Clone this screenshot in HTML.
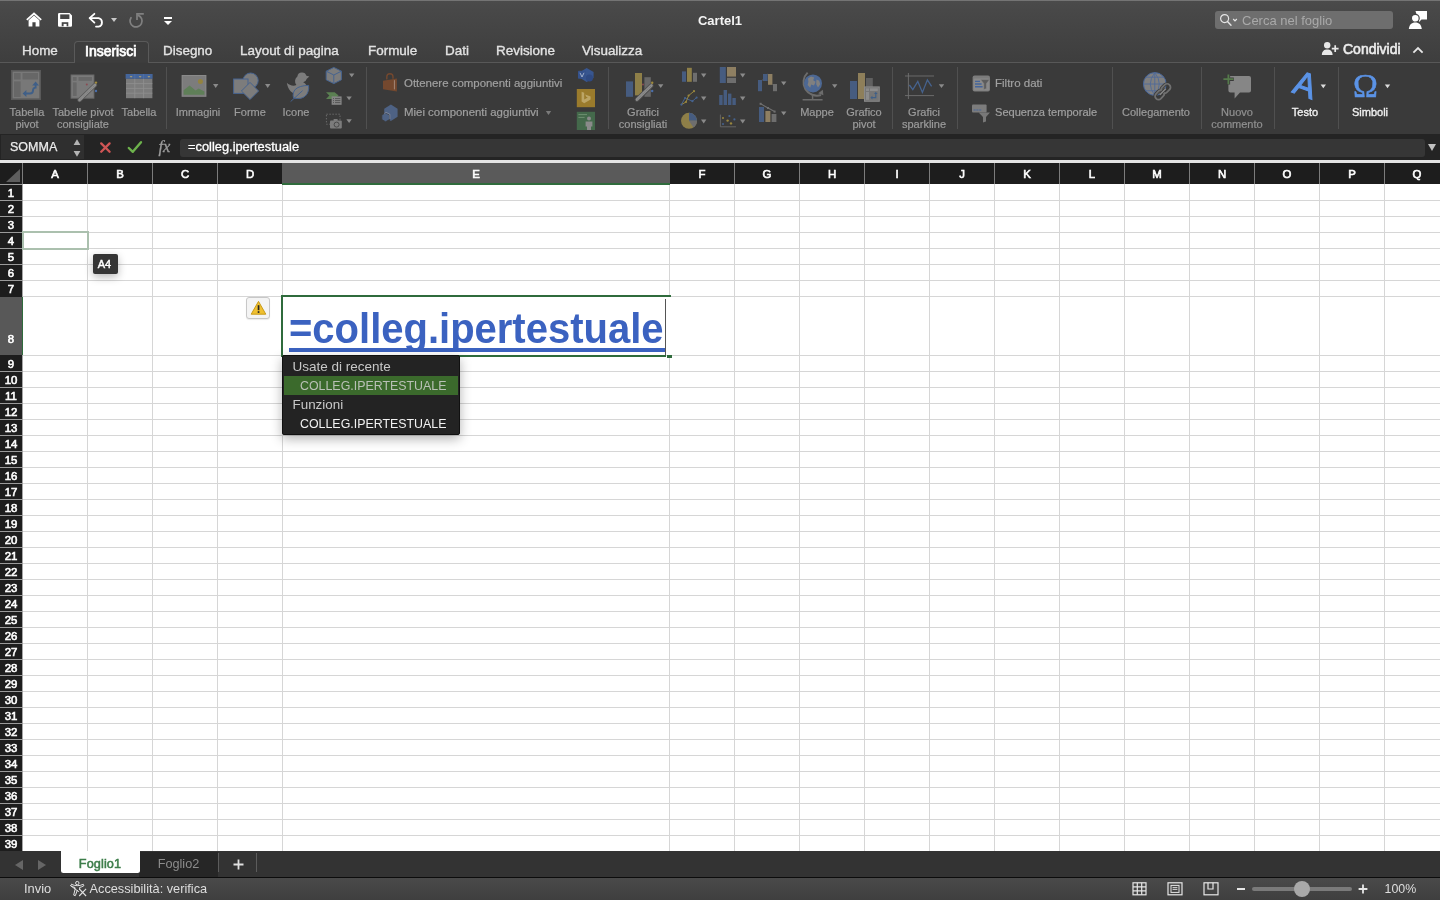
<!DOCTYPE html>
<html lang="it">
<head>
<meta charset="utf-8">
<title>Cartel1</title>
<style>
*{box-sizing:border-box;margin:0;padding:0}
html,body{width:1440px;height:900px;overflow:hidden;background:#fff}
body{position:relative;will-change:transform;font-family:"Liberation Sans",sans-serif;color:#fff;-webkit-font-smoothing:antialiased}
.abs,.abs *{position:absolute}
.t{white-space:nowrap;line-height:1}
/* top chrome */
#chrome{left:0;top:0;width:1440px;height:63px;background:linear-gradient(#4b4b4b 0,#484848 10px,#3e3e3e 62px)}
#chrome .topline{left:0;top:0;width:1440px;height:1px;background:#747474}
#tabline{left:0;top:62px;width:1440px;height:1px;background:#585858}
.tab{top:44px;font-size:13.450px;color:#e2e2e2;-webkit-text-stroke:.35px #e2e2e2}
#ribbon{left:0;top:63px;width:1440px;height:71px;background:#3a3a3a}
.sep{top:4px;width:1px;height:62px;background:#505050}
.rl{font-size:11px;color:#9c9c9c;text-align:center;line-height:12px;white-space:nowrap;-webkit-text-stroke:.2px #9c9c9c}
.arr{width:0;height:0;border-left:3px solid transparent;border-right:3px solid transparent;border-top:4px solid #8a8a8a}
/* formula bar */
#fbar{left:0;top:134px;width:1440px;height:27px;background:#242424}
#fline{left:0;top:160.300px;width:1440px;height:2.500px;background:#e4e4e4}
/* sheet */
#colhdr{left:0;top:163px;width:1440px;height:21px;background:#1d1d1d}
.ch{top:0;height:21px;font-size:11.400px;-webkit-text-stroke:.6px #fff;text-align:center;line-height:22px;color:#fff}
.cs{top:0;width:1px;height:21px;background:#7c7c7c}
#rowhdr{left:0;top:184px;width:22px;height:667px;background:#1d1d1d;overflow:hidden}
.rh{left:0;width:22px;height:16px;font-size:11.400px;-webkit-text-stroke:.6px #fff;text-align:center;line-height:17px;color:#fff}
#grid{left:23px;top:184px;width:1417px;height:667px;overflow:hidden;background:#fff}
.vl{top:0;width:1px;height:667px;background:#d6d6d6}
.hl{left:0;width:1417px;height:1px;background:#d6d6d6}
/* bottom */
#sheettabs{left:0;top:851px;width:1440px;height:27px;background:#333}
#status{left:0;top:878px;width:1440px;height:22px;background:linear-gradient(#4a4a4a,#3f3f3f);font-size:12.900px;color:#dedede}
</style>
</head>
<body>
<div id="chrome" class="abs">
  <div class="topline"></div>
  <!-- quick access icons -->
  <svg style="left:25px;top:11px" width="18" height="17" viewBox="0 0 18 17">
    <path d="M9 1.2 L1.2 8.3 L2.4 9.6 L9 3.7 L15.6 9.6 L16.8 8.3 Z" fill="#fff"/>
    <path d="M3.6 9.3 L9 4.6 L14.4 9.3 V15.6 H10.6 V11.2 H7.4 V15.6 H3.6 Z" fill="#fff"/>
  </svg>
  <svg style="left:57px;top:12px" width="16" height="16" viewBox="0 0 16 16">
    <path d="M2.200 1 H12.600 L15 3.400 V13.600 a1.200 1.200 0 0 1 -1.200 1.200 H2.200 a1.200 1.200 0 0 1 -1.200 -1.200 V2.200 a1.200 1.200 0 0 1 1.200 -1.200 Z" fill="#fff"/>
    <rect x="3.200" y="2.400" width="9.200" height="4.600" fill="#474747"/>
    <rect x="4.700" y="10.200" width="6.600" height="4" fill="#464646"/>
    <rect x="6.600" y="11.900" width="3" height="2.900" fill="#fff"/>
  </svg>
  <svg style="left:88px;top:12px" width="18" height="16" viewBox="0 0 18 16">
    <path d="M6.4 1.8 L1.6 6.2 L6.4 10.6" fill="none" stroke="#fff" stroke-width="1.8" stroke-linecap="round" stroke-linejoin="round"/>
    <path d="M2 6.2 H10.6 A4.3 4.3 0 0 1 10.6 14.6 H8" fill="none" stroke="#fff" stroke-width="1.8" stroke-linecap="round"/>
  </svg>
  <div class="arr" style="left:110.800px;top:18px;border-top-color:#c8c8c8;border-left-width:3px;border-right-width:3px;border-top-width:4.200px"></div>
  <svg style="left:128px;top:12px" width="17" height="17" viewBox="0 0 17 17">
    <path d="M3 5.700 A6 6 0 1 0 10.300 3.400" fill="none" stroke="#808080" stroke-width="1.700" stroke-linecap="round"/>
    <path d="M9 8 V1.850 H15.800" fill="none" stroke="#808080" stroke-width="1.700" stroke-linejoin="miter"/>
  </svg>
  <div style="left:164px;top:17px;width:8px;height:2px;background:#fff"></div>
  <div class="arr" style="left:164px;top:21px;border-top-color:#fff;border-left-width:4px;border-right-width:4px;border-top-width:4.5px"></div>
  <!-- title -->
  <div class="t" style="left:620px;width:200px;top:14px;text-align:center;font-size:13px;font-weight:bold;color:#f4f4f4">Cartel1</div>
  <!-- search -->
  <div style="left:1215px;top:11px;width:178px;height:18px;border-radius:3px;background:#6e6e6e"></div>
  <svg style="left:1219px;top:13px" width="20" height="14" viewBox="0 0 20 14">
    <circle cx="5.6" cy="5.6" r="4" fill="none" stroke="#e6e6e6" stroke-width="1.2"/>
    <path d="M8.5 8.5 L12 12.2" stroke="#e6e6e6" stroke-width="1.4" stroke-linecap="round"/>
    <path d="M14.2 6 L16 7.8 L17.8 6" fill="none" stroke="#e6e6e6" stroke-width="1.2"/>
  </svg>
  <div class="t" style="left:1242px;top:14px;font-size:13px;color:#a9a9a9">Cerca nel foglio</div>
  <!-- person/comment icon -->
  <svg style="left:1408px;top:10px" width="20" height="20" viewBox="0 0 20 20">
    <path d="M7.5 1 H19 V9.5 H13.5 L11 12 V9.5 H10" fill="#fff"/>
    <circle cx="7.3" cy="8.3" r="3.9" fill="#fff" stroke="#454545" stroke-width="1.2"/>
    <path d="M0.8 19 C1.5 13.8 4.5 12.6 7.3 12.6 C10.1 12.6 13.1 13.8 13.8 19 Z" fill="#fff"/>
  </svg>
  <!-- tabs -->
  <div style="left:73.500px;top:40.500px;width:75.500px;height:22.500px;border:1px solid #5a5a5a;border-bottom:none;border-radius:4px 4px 0 0;background:#3d3d3d"></div>
  <div class="t tab" style="left:22px">Home</div>
  <div class="t tab" style="left:85px;font-size:14px;color:#fff;-webkit-text-stroke:.75px #fff">Inserisci</div>
  <div class="t tab" style="left:163px">Disegno</div>
  <div class="t tab" style="left:240px">Layout di pagina</div>
  <div class="t tab" style="left:368px">Formule</div>
  <div class="t tab" style="left:445px">Dati</div>
  <div class="t tab" style="left:496px">Revisione</div>
  <div class="t tab" style="left:582px">Visualizza</div>
  <!-- share -->
  <svg style="left:1321px;top:41px" width="19" height="15" viewBox="0 0 19 15">
    <circle cx="6.2" cy="4.2" r="3.2" fill="#e8e8e8"/>
    <path d="M0.8 14 C1 9.6 3.4 8.4 6.2 8.4 C9 8.4 11.4 9.6 11.6 14 Z" fill="#e8e8e8"/>
    <path d="M14.2 4.2 V11 M10.8 7.6 H17.6" stroke="#e8e8e8" stroke-width="1.7"/>
  </svg>
  <div class="t" style="left:1343px;top:42px;font-size:14px;color:#ececec;-webkit-text-stroke:.6px #ececec">Condividi</div>
  <svg style="left:1412px;top:46px" width="12" height="8" viewBox="0 0 12 8">
    <path d="M1.4 6.6 L6 2 L10.6 6.6" fill="none" stroke="#e8e8e8" stroke-width="1.8"/>
  </svg>
</div>
<div id="tabline" class="abs"></div>
<div class="abs" style="left:75px;top:62px;width:73px;height:1px;background:#3c3c3c"></div>
<div id="ribbon" class="abs">
<svg style="left:0;top:0" width="1440" height="71" viewBox="0 63 1440 71">
<defs>
  <path id="dd" d="M0 0 H5.400 L2.700 3.900 Z"/>
</defs>
<!-- separators -->
<g fill="#505050">
<rect x="166" y="67" width="1" height="62"/><rect x="366" y="67" width="1" height="62"/><rect x="608" y="67" width="1" height="62"/>
<rect x="892" y="67" width="1" height="62"/><rect x="957" y="67" width="1" height="62"/><rect x="1112" y="67" width="1" height="62"/>
<rect x="1201" y="67" width="1" height="62"/><rect x="1274" y="67" width="1" height="62"/><rect x="1338" y="67" width="1" height="62"/>
</g>
<!-- pivot table -->
<rect x="11" y="70" width="30" height="30" fill="#595959"/>
<rect x="12.6" y="71.6" width="26.8" height="26.8" fill="#787878"/>
<g fill="#676767"><rect x="14" y="73" width="6.6" height="6.5"/><rect x="22.5" y="73" width="15.5" height="6.5"/><rect x="14" y="81.4" width="6.6" height="15.6"/></g>
<g fill="none" stroke="#3f5f88" stroke-width="1.9"><path d="M25 93.5 H30 Q33 93.5 33 90.5 Q33 87.6 35.6 87.6 V84.5"/></g>
<path d="M22.6 93.5 L26.4 90 V97 Z M35.6 81.6 L32.2 85.6 H39 Z" fill="#3f5f88"/>
<!-- recommended pivot -->
<rect x="70.6" y="74.5" width="23.8" height="24.2" fill="#6a6a6a"/>
<rect x="71.6" y="75.5" width="21.8" height="22.2" fill="#7a7a7a"/>
<g fill="#686868"><rect x="72.9" y="77" width="3.7" height="3.8"/><rect x="78.5" y="77" width="13.4" height="3.8"/><rect x="72.9" y="82.4" width="3.7" height="13.6"/></g>
<path d="M79.5 100 L95 85" stroke="#5a5a5a" stroke-width="4.4" stroke-linecap="round"/>
<path d="M79.5 100 L95 85" stroke="#8d8d8d" stroke-width="2.6" stroke-linecap="round"/>
<path d="M80 99.5 L94.5 85.5" stroke="#707070" stroke-width="0.8" stroke-dasharray="1 1"/>
<circle cx="86.8" cy="84.6" r="1" fill="#8a4a52"/><circle cx="96" cy="82.6" r="1.2" fill="#a08a3c"/><circle cx="96" cy="91" r="1.2" fill="#4a6eaa"/>
<!-- table -->
<rect x="125.6" y="74" width="27" height="4.8" fill="#44659b"/>
<rect x="126" y="78.8" width="26.4" height="19.4" fill="#7c7c7c"/>
<g stroke="#8f8f8f" stroke-width="0.8"><path d="M134.8 78.8 V98.2 M143.6 78.8 V98.2 M126 83.6 H152.4 M126 88.4 H152.4 M126 93.2 H152.4"/></g>
<g stroke="#5577ad" stroke-width="0.6"><path d="M134.8 74 V78.8 M143.6 74 V78.8"/></g>
<g fill="#a59a72"><path d="M129.6 76 h3 l-1.5 1.8z M138.6 76 h3 l-1.5 1.8z M147.4 76 h3 l-1.5 1.8z"/></g>
<!-- picture -->
<rect x="181.6" y="75" width="24.8" height="21.8" fill="#8a8a8a"/>
<rect x="182.6" y="76" width="22.8" height="19.8" fill="#7c7c7c"/>
<circle cx="200.4" cy="81.6" r="2.5" fill="#93823f"/>
<path d="M183.6 94.8 V90.2 L189.6 85.6 L195.6 90.6 L198.6 88.6 L204.4 91.6 V94.8 Z" fill="#5f7f58"/>
<use href="#dd" x="213" y="84" fill="#8a8a8a"/>
<!-- shapes -->
<circle cx="250.6" cy="80.6" r="7.6" fill="#7c7c7c" stroke="#46638f" stroke-width="1"/>
<rect x="233.6" y="79" width="14.4" height="14.4" fill="#7c7c7c" stroke="#46638f" stroke-width="1"/>
<path d="M250 82.4 L258.6 91 L250 99.6 L241.4 91 Z" fill="#7c7c7c" stroke="#46638f" stroke-width="1"/>
<use href="#dd" x="265" y="84" fill="#8a8a8a"/>
<!-- icons: duck + leaf -->
<path d="M297.4 76.4 a4.6 4.6 0 0 1 9 -0.6 l3 0.6 l-2.6 2.4 a4.6 4.6 0 0 1 -3.6 3.4 c3 1.6 4.4 4 4 6.6 c-0.6 3.6 -4 5.6 -8.600 5.600 c-6.800 0 -10.600 -4.600 -11.800 -11.600 c2.600 2.600 6.600 3.600 9.600 2.200 a6 6 0 0 1 1 -8.600 z" fill="#7c7c7c"/>
<path d="M293.6 98 C291.600 91 296 85.600 308.600 85.400 C309.600 94.600 303.600 100.400 293.600 98 Z" fill="#7c7c7c" stroke="#46638f" stroke-width="1"/>
<path d="M290.600 101.600 L302.600 90.600" stroke="#46638f" stroke-width="1"/>
<!-- 3d cube -->
<path d="M333.800 67.400 L341.400 71.200 V79.800 L333.800 83.600 L326.200 79.800 V71.200 Z" fill="#7c7c7c" stroke="#46638f" stroke-width="1"/>
<path d="M326.200 71.200 L333.800 75 L341.400 71.200 M333.800 75 V83.600" fill="none" stroke="#46638f" stroke-width="1"/>
<use href="#dd" x="349" y="73.400" fill="#8a8a8a"/>
<!-- smartart -->
<path d="M326 92.200 H334.600 L338.600 95.600 L334.600 99 H326 L329.400 95.600 Z" fill="#5b8052"/>
<rect x="331.600" y="96.400" width="10" height="8.400" fill="#868686"/>
<g stroke="#505050" stroke-width="0.9"><path d="M333 98.600 h1 M335 98.600 h5.400 M333 100.600 h1 M335 100.600 h5.400 M333 102.600 h1 M335 102.600 h5.400"/></g>
<use href="#dd" x="346.400" y="96.400" fill="#8a8a8a"/>
<!-- screenshot -->
<rect x="326.400" y="114.200" width="13.600" height="10" fill="none" stroke="#6c6c6c" stroke-width="1" stroke-dasharray="1.400 1.600"/>
<rect x="330" y="120.400" width="11.800" height="8.200" rx="1" fill="#7c7c7c"/>
<rect x="333.600" y="119" width="4" height="2" fill="#7c7c7c"/>
<circle cx="336.600" cy="124.600" r="2.500" fill="#7c7c7c" stroke="#4a4a4a" stroke-width="1"/>
<use href="#dd" x="346.400" y="119.200" fill="#8a8a8a"/>
<!-- store bag -->
<path d="M386.800 79.600 V76.800 a3.100 3.100 0 0 1 6.200 0 V78.800" fill="none" stroke="#74482e" stroke-width="1.400"/>
<path d="M383 80.700 L396.900 78.600 V91.400 L383 89.200 Z" fill="#74482e"/>
<path d="M394.400 80.200 V89.400" stroke="#a98f80" stroke-width="0.900"/>
<!-- my addins cube -->
<path d="M390.900 104.500 L397.600 108.700 V116.700 L390.900 120.900 L384.200 116.700 V108.700 Z" fill="#4e6284"/>
<path d="M385.600 112.700 L389.600 115 V119.500 L385.600 121.800 L381.800 119.500 V115 Z" fill="#4e6284" stroke="#3a3a3a" stroke-width="0.800"/>
<path d="M384.200 113.600 L385.900 112.300 L389.900 114.300 V119" fill="none" stroke="#8791a6" stroke-width="0.800"/>
<use href="#dd" x="545.800" y="111" fill="#7a7a7a"/>
<!-- visio -->
<path d="M586.600 68 L593.600 72 V78 L586.600 82 L581 78.600 V71.400 Z" fill="#38568f"/>
<circle cx="589.400" cy="78" r="3.600" fill="#2f4a82"/>
<rect x="578" y="70.800" width="8" height="8" rx="0.800" fill="#35528c"/>
<path d="M580 72.800 L582 77 L584 72.800" fill="none" stroke="#aab8d0" stroke-width="0.900"/>
<!-- bing -->
<rect x="576.800" y="89" width="18.200" height="18.200" fill="#9a7b2c"/>
<path d="M581.600 91.800 L584.200 92.800 V99.400 L587.800 97.600 L586.200 96.800 L585.200 94.600 L590.600 96.400 V99.400 L584.200 103.200 L581.600 101.600 Z" fill="#bca566"/>
<!-- people graph -->
<rect x="576.800" y="111.800" width="18.200" height="18.200" fill="#44694b"/>
<path d="M578.400 114.600 H587 M578.400 117.400 H584.600" stroke="#6e9070" stroke-width="1"/>
<circle cx="589" cy="118.400" r="2" fill="#8a8a8a"/>
<path d="M585.600 121.600 H592.400 V126.600 H591 V130 H587 V126.600 H585.600 Z" fill="#8a8a8a"/>
<!-- recommended charts -->
<rect x="626" y="81.400" width="7" height="15.400" fill="#465c80"/>
<rect x="635" y="73" width="7" height="22.400" fill="#8e7f48"/>
<rect x="644.400" y="77.200" width="6.400" height="19.600" fill="#686868"/>
<path d="M637 99.600 L651.400 85.600" stroke="#4c4c4c" stroke-width="4.600" stroke-linecap="round"/>
<path d="M637 99.600 L651.400 85.600" stroke="#8d8d8d" stroke-width="2.800" stroke-linecap="round"/>
<path d="M637.400 99.200 L651 86" stroke="#6c6c6c" stroke-width="0.800" stroke-dasharray="1 1"/>
<circle cx="643" cy="84.600" r="1" fill="#8a4a52"/><circle cx="652.200" cy="82.800" r="1.200" fill="#a08a3c"/><circle cx="652.200" cy="91" r="1.200" fill="#4a6eaa"/>
<use href="#dd" x="658" y="84.200" fill="#8a8a8a"/>
<!-- column small -->
<rect x="682" y="71.400" width="4" height="10.400" fill="#465c80"/><rect x="687" y="67.800" width="4.800" height="14" fill="#8e7f48"/><rect x="693" y="72.800" width="4" height="9" fill="#6e6e6e"/>
<use href="#dd" x="701" y="73.600" fill="#8a8a8a"/>
<!-- line -->
<path d="M681.400 104.600 L685 98 L692.400 101.200 L696.600 97.600" fill="none" stroke="#46638f" stroke-width="1"/>
<path d="M681.400 104.600 L686 102 L688.600 95.600 L694 91.200" fill="none" stroke="#9a873e" stroke-width="1"/>
<g fill="#46638f"><circle cx="681.400" cy="104.600" r="1.100"/><circle cx="685" cy="98" r="1.100"/><circle cx="692.400" cy="101.200" r="1.100"/><circle cx="696.600" cy="97.600" r="1.100"/></g>
<g fill="#9a873e"><circle cx="686" cy="102" r="1.100"/><circle cx="688.600" cy="95.600" r="1.100"/><circle cx="694" cy="91.200" r="1.100"/></g>
<use href="#dd" x="701" y="96.600" fill="#8a8a8a"/>
<!-- pie -->
<circle cx="689" cy="120.800" r="8" fill="#8e7f48"/>
<path d="M689 120.800 V112.800 A8 8 0 0 1 697 120.800 Z" fill="#465c80"/>
<path d="M689 120.800 H697 A8 8 0 0 1 693.400 127.500 Z" fill="#6e6e6e"/>
<use href="#dd" x="701" y="119.600" fill="#8a8a8a"/>
<!-- treemap -->
<rect x="719.800" y="67" width="6" height="16" fill="#465c80"/><rect x="727" y="67" width="9" height="9.600" fill="#8e7f62"/><rect x="727" y="77.800" width="9" height="5.200" fill="#6e6e6e"/>
<use href="#dd" x="740" y="73.600" fill="#8a8a8a"/>
<!-- histogram -->
<g fill="#465c80"><rect x="719.200" y="95" width="3.400" height="10"/><rect x="723.600" y="90" width="3.400" height="15"/><rect x="728" y="93.600" width="3.400" height="11.400"/><rect x="732.400" y="98" width="3.400" height="7"/></g>
<use href="#dd" x="740" y="96.600" fill="#8a8a8a"/>
<!-- scatter -->
<path d="M720.400 114.600 V126.800 H736" fill="none" stroke="#6a6a6a" stroke-width="0.900"/>
<g fill="#9a873e"><circle cx="723" cy="118" r="1"/><circle cx="727.600" cy="120.600" r="1.200"/><circle cx="731" cy="123.400" r="1.200"/></g>
<g fill="#46638f"><circle cx="729.400" cy="116" r="1.100"/><circle cx="734.400" cy="119.400" r="1.100"/><circle cx="723" cy="124" r="1"/></g>
<use href="#dd" x="740" y="119.600" fill="#8a8a8a"/>
<!-- waterfall -->
<rect x="758" y="80" width="4" height="11.200" fill="#465c80"/><rect x="763" y="74" width="4.600" height="7" fill="#465c80"/><rect x="768" y="74" width="4.400" height="10.800" fill="#8e7f62"/><rect x="773" y="84" width="4" height="7.200" fill="#6e6e6e"/>
<path d="M762 80 h1.200 M767.400 74.200 h0.800 M772.200 84.600 h1" stroke="#6a6a6a" stroke-width="0.700"/>
<use href="#dd" x="781" y="81.400" fill="#8a8a8a"/>
<!-- combo -->
<rect x="759" y="107" width="5" height="15" fill="#465c80"/><rect x="765.400" y="111" width="5" height="11" fill="#8e7f62"/><rect x="771.600" y="114" width="4.800" height="8" fill="#6e6e6e"/>
<path d="M760.600 103.800 L768 108 L774.600 111.600" fill="none" stroke="#707070" stroke-width="1.100"/>
<g fill="#707070"><rect x="759.600" y="102.800" width="2" height="2"/><rect x="767" y="107" width="2" height="2"/><rect x="773.600" y="110.600" width="2" height="2"/></g>
<use href="#dd" x="781" y="111.400" fill="#8a8a8a"/>
<!-- maps globe -->
<path d="M807.600 72.600 A13.400 13.400 0 0 0 821 95" fill="none" stroke="#6c6c6c" stroke-width="2"/>
<circle cx="813" cy="83.400" r="9" fill="#4d6894"/>
<path d="M808 78.600 l3 -2.200 l3.200 1.200 l-1 2.600 l2.400 1.600 l-1.600 3.600 l-2.800 -0.800 l-1 3.200 l-2.600 -2.800 l0.800 -3.200 z M816.400 79.600 l2.800 1.200 l1 3.400 l-2.200 3.200 l-1.800 -3.200 z" fill="#808080"/>
<path d="M812.600 95.400 V99.200 M802.600 99.800 H822.600" stroke="#6c6c6c" stroke-width="1.500"/>
<path d="M818.200 93.200 l4.600 -3.400 l0.600 5.400 z" fill="#6c6c6c"/>
<use href="#dd" x="832" y="84.200" fill="#8a8a8a"/>
<!-- pivot chart -->
<rect x="850" y="81" width="7" height="18" fill="#465c80"/><rect x="858" y="73" width="7" height="26" fill="#8e7f5a"/><rect x="866" y="78" width="6.800" height="9" fill="#606060"/>
<rect x="864" y="86.400" width="15.800" height="15.400" fill="#8a8a8a"/>
<rect x="865" y="87.400" width="13.800" height="13.400" fill="#767676"/>
<g fill="#8c8c8c"><rect x="866" y="88.400" width="3" height="2.600"/><rect x="870" y="88.400" width="7.800" height="2.600"/><rect x="866" y="92" width="3" height="7.800"/></g>
<path d="M871.600 97.600 H875.800 V93.400" fill="none" stroke="#3f5f88" stroke-width="1.100"/>
<path d="M870.400 97.600 l2 -1.800 v3.600z M875.800 91.800 l-1.800 2.200 h3.600z" fill="#3f5f88"/>
<!-- sparkline -->
<path d="M908.400 73 V99 M905 76 H934 M905 95.600 H934" fill="none" stroke="#707070" stroke-width="0.900"/>
<path d="M909.400 85 L912.800 89.600 L917.800 81.400 L922.400 92.400 L927.400 79.800 L931.600 86.400" fill="none" stroke="#46638f" stroke-width="1.300"/>
<use href="#dd" x="938.800" y="84.200" fill="#8a8a8a"/>
<!-- slicer -->
<rect x="972.600" y="75.400" width="17.400" height="16.200" rx="2" fill="#7c7c7c"/>
<rect x="973.600" y="78.600" width="15.400" height="12" rx="1" fill="#8a8a8a"/>
<path d="M975 81.400 h5 M975 84 h6.600 M975 86.800 h7.600" stroke="#44659b" stroke-width="1.400"/>
<path d="M980.600 79.600 H989.600 L986.400 83.600 V88.600 L983.800 89.600 V83.600 Z" fill="#5c5c5c" stroke="#8a8a8a" stroke-width="0.500"/>
<!-- timeline -->
<rect x="972" y="104.600" width="14.600" height="8" rx="1" fill="#7c7c7c"/>
<path d="M973.600 110 h2 M976.400 110 h2 M979.200 110 h2" stroke="#44659b" stroke-width="1.200"/>
<path d="M978.600 112.400 H990 L986 117 V121.600 L983 122.400 V117 Z" fill="#787878"/>
<!-- link globe -->
<circle cx="1154.800" cy="84" r="11.400" fill="#808080" stroke="#46659a" stroke-width="1"/>
<path d="M1143.400 84 H1166.200 M1154.800 72.600 V95.400 M1145.600 77.200 H1164 M1145.600 90.800 H1164 M1154.800 72.600 Q1145.800 84 1154.800 95.400 M1154.800 72.600 Q1163.800 84 1154.800 95.400" fill="none" stroke="#4f6a98" stroke-width="0.900"/>
<g transform="rotate(-46 1162.800 91.700)">
<rect x="1153.200" y="88.300" width="10.400" height="6.800" rx="3.400" fill="none" stroke="#3a3a3a" stroke-width="3.400"/>
<rect x="1162" y="88.300" width="10.400" height="6.800" rx="3.400" fill="none" stroke="#3a3a3a" stroke-width="3.400"/>
<rect x="1153.200" y="88.300" width="10.400" height="6.800" rx="3.400" fill="none" stroke="#707070" stroke-width="1.800"/>
<rect x="1162" y="88.300" width="10.400" height="6.800" rx="3.400" fill="none" stroke="#707070" stroke-width="1.800"/>
<path d="M1159.200 91.700 H1166.400" stroke="#3a3a3a" stroke-width="3"/>
<path d="M1158.600 91.700 H1167" stroke="#8a8a8a" stroke-width="1.400"/>
</g>
<!-- new comment -->
<path d="M1230.400 76 H1249 a2 2 0 0 1 2 2 V90.600 a2 2 0 0 1 -2 2 H1240 L1234.600 98.600 V92.600 H1230.400 a2 2 0 0 1 -2 -2 V78 a2 2 0 0 1 2 -2 Z" fill="#868686"/>
<path d="M1228.400 74 V84.600 M1223 79.200 H1233.800" stroke="#3a3a3a" stroke-width="3.400"/>
<path d="M1228.400 74.400 V84.200 M1223.400 79.200 H1233.400" stroke="#557a4b" stroke-width="1.800"/>
<!-- Testo arrows -->
<use href="#dd" x="1320.600" y="84.400" fill="#dcdcdc"/>
<use href="#dd" x="1384.800" y="84.400" fill="#dcdcdc"/>
</svg>
<!-- labels -->
<div class="rl" style="left:-3px;width:60px;top:43px">Tabella<br>pivot</div>
<div class="rl" style="left:43px;width:80px;top:43px">Tabelle pivot<br>consigliate</div>
<div class="rl" style="left:109px;width:60px;top:43px">Tabella</div>
<div class="rl" style="left:168px;width:60px;top:43px">Immagini</div>
<div class="rl" style="left:220px;width:60px;top:43px">Forme</div>
<div class="rl" style="left:266px;width:60px;top:43px">Icone</div>
<div class="rl" style="left:404px;top:14px;text-align:left;color:#a2a2a2;font-size:11.450px">Ottenere componenti aggiuntivi</div>
<div class="rl" style="left:404px;top:43px;text-align:left;color:#a2a2a2;font-size:11.420px">Miei componenti aggiuntivi</div>
<div class="rl" style="left:603px;width:80px;top:43px">Grafici<br>consigliati</div>
<div class="rl" style="left:787px;width:60px;top:43px">Mappe</div>
<div class="rl" style="left:834px;width:60px;top:43px">Grafico<br>pivot</div>
<div class="rl" style="left:894px;width:60px;top:43px">Grafici<br>sparkline</div>
<div class="rl" style="left:995px;top:14px;text-align:left;color:#a2a2a2;font-size:11.500px">Filtro dati</div>
<div class="rl" style="left:995px;top:43px;text-align:left;color:#a2a2a2;font-size:11.080px">Sequenza temporale</div>
<div class="rl" style="left:1116px;width:80px;top:43px">Collegamento</div>
<div class="rl" style="left:1197px;width:80px;top:43px;color:#8c8c8c">Nuovo<br>commento</div>
<div class="rl" style="left:1275px;width:60px;top:43px;color:#f0f0f0;-webkit-text-stroke:.35px #f0f0f0">Testo</div>
<div class="rl" style="left:1340px;width:60px;top:43px;color:#f0f0f0;-webkit-text-stroke:.35px #f0f0f0">Simboli</div>
<svg style="left:1280px;top:0" width="50" height="45" viewBox="1280 63 50 45"><text transform="matrix(1.035 0.375 -0.342 1.085 1291.300 92.100)" font-family="Liberation Sans, sans-serif" font-size="30" fill="#5b93e6" stroke="#5b93e6" stroke-width="0.900">A</text></svg>
<div class="t" style="left:1353px;top:5px;font-family:'Liberation Serif','DejaVu Serif',serif;font-size:34.500px;color:#5b93e6;-webkit-text-stroke:.5px #5b93e6;transform-origin:0 0;transform:scaleX(.97)">Ω</div>
</div>
<div id="fbar" class="abs">
  <div style="left:1px;top:1px;width:83px;height:24px;background:#2f2f2f"></div>
  <div class="t" style="left:10px;top:6.500px;font-size:12.500px;color:#ececec;-webkit-text-stroke:.25px #ececec">SOMMA</div>
  <svg style="left:72px;top:4px" width="10" height="20" viewBox="0 0 10 20"><path d="M5 1.200 L8.400 7 H1.600 Z M5 18.800 L8.400 13 H1.600 Z" fill="#b4b4b4"/></svg>
  <svg style="left:99px;top:7px" width="13" height="13" viewBox="0 0 13 13"><path d="M2.200 2.400 L10.600 10.800 M10.600 2.400 L2.200 10.800" stroke="#d05555" stroke-width="2.300" stroke-linecap="round"/></svg>
  <svg style="left:127px;top:6px" width="16" height="14" viewBox="0 0 16 14"><path d="M1.800 8 L5.800 11.800 L14 2.200" fill="none" stroke="#6db24c" stroke-width="2.400" stroke-linecap="round" stroke-linejoin="round"/></svg>
  <div class="t" style="left:158.500px;top:4.500px;font-family:'Liberation Serif',serif;font-style:italic;font-size:16.500px;color:#9c9c9c;-webkit-text-stroke:.3px #9c9c9c">fx</div>
  <div style="left:180px;top:5px;width:1245px;height:18px;border-radius:3px;background:#363636"></div>
  <div class="t" style="left:188px;top:7.200px;font-size:12.850px;color:#fff;-webkit-text-stroke:.3px #fff">=colleg.ipertestuale</div>
  <div class="arr" style="left:1428px;top:9.500px;border-top-color:#c0c0c0;border-left-width:4.500px;border-right-width:4.500px;border-top-width:7px"></div>
</div>
<div id="fline" class="abs"></div>
<div id="colhdr" class="abs">
<svg style="left:5px;top:5px" width="16" height="15" viewBox="0 0 16 15"><path d="M15 1 V14 H1 Z" fill="#5e5e5e"/></svg>
<div style="left:282px;top:0;width:388px;height:21px;background:#5a5a5a"></div>
<div style="left:282px;top:20px;width:388px;height:2px;background:#2f6b3c;z-index:3"></div>
<div class="ch" style="left:23px;width:64px">A</div>
<div class="ch" style="left:88px;width:64px">B</div>
<div class="ch" style="left:153px;width:64px">C</div>
<div class="ch" style="left:218px;width:64px">D</div>
<div class="ch" style="left:283px;width:386px">E</div>
<div class="ch" style="left:670px;width:64px">F</div>
<div class="ch" style="left:735px;width:64px">G</div>
<div class="ch" style="left:800px;width:64px">H</div>
<div class="ch" style="left:865px;width:64px">I</div>
<div class="ch" style="left:930px;width:64px">J</div>
<div class="ch" style="left:995px;width:64px">K</div>
<div class="ch" style="left:1060px;width:64px">L</div>
<div class="ch" style="left:1125px;width:64px">M</div>
<div class="ch" style="left:1190px;width:64px">N</div>
<div class="ch" style="left:1255px;width:64px">O</div>
<div class="ch" style="left:1320px;width:64px">P</div>
<div class="ch" style="left:1385px;width:64px">Q</div>
<div class="cs" style="left:22px"></div>
<div class="cs" style="left:87px"></div>
<div class="cs" style="left:152px"></div>
<div class="cs" style="left:217px"></div>
<div class="cs" style="left:734px"></div>
<div class="cs" style="left:799px"></div>
<div class="cs" style="left:864px"></div>
<div class="cs" style="left:929px"></div>
<div class="cs" style="left:994px"></div>
<div class="cs" style="left:1059px"></div>
<div class="cs" style="left:1124px"></div>
<div class="cs" style="left:1189px"></div>
<div class="cs" style="left:1254px"></div>
<div class="cs" style="left:1319px"></div>
<div class="cs" style="left:1384px"></div>
</div>
<div id="rowhdr" class="abs">
<div style="left:0;top:113px;width:22px;height:58px;background:#585858"></div>
<div class="rh" style="top:1px">1</div>
<div class="rh" style="top:17px">2</div>
<div class="rh" style="top:33px">3</div>
<div class="rh" style="top:49px">4</div>
<div class="rh" style="top:65px">5</div>
<div class="rh" style="top:81px">6</div>
<div class="rh" style="top:97px">7</div>
<div class="rh" style="top:147px">8</div>
<div class="rh" style="top:172px">9</div>
<div class="rh" style="top:188px">10</div>
<div class="rh" style="top:204px">11</div>
<div class="rh" style="top:220px">12</div>
<div class="rh" style="top:236px">13</div>
<div class="rh" style="top:252px">14</div>
<div class="rh" style="top:268px">15</div>
<div class="rh" style="top:284px">16</div>
<div class="rh" style="top:300px">17</div>
<div class="rh" style="top:316px">18</div>
<div class="rh" style="top:332px">19</div>
<div class="rh" style="top:348px">20</div>
<div class="rh" style="top:364px">21</div>
<div class="rh" style="top:380px">22</div>
<div class="rh" style="top:396px">23</div>
<div class="rh" style="top:412px">24</div>
<div class="rh" style="top:428px">25</div>
<div class="rh" style="top:444px">26</div>
<div class="rh" style="top:460px">27</div>
<div class="rh" style="top:476px">28</div>
<div class="rh" style="top:492px">29</div>
<div class="rh" style="top:508px">30</div>
<div class="rh" style="top:524px">31</div>
<div class="rh" style="top:540px">32</div>
<div class="rh" style="top:556px">33</div>
<div class="rh" style="top:572px">34</div>
<div class="rh" style="top:588px">35</div>
<div class="rh" style="top:604px">36</div>
<div class="rh" style="top:620px">37</div>
<div class="rh" style="top:636px">38</div>
<div class="rh" style="top:652px">39</div>
<div style="left:0;top:0px;width:22px;height:1px;background:#9a9a9a"></div>
<div style="left:0;top:16px;width:22px;height:1px;background:#9a9a9a"></div>
<div style="left:0;top:32px;width:22px;height:1px;background:#9a9a9a"></div>
<div style="left:0;top:48px;width:22px;height:1px;background:#9a9a9a"></div>
<div style="left:0;top:64px;width:22px;height:1px;background:#9a9a9a"></div>
<div style="left:0;top:80px;width:22px;height:1px;background:#9a9a9a"></div>
<div style="left:0;top:96px;width:22px;height:1px;background:#9a9a9a"></div>
<div style="left:0;top:187px;width:22px;height:1px;background:#9a9a9a"></div>
<div style="left:0;top:203px;width:22px;height:1px;background:#9a9a9a"></div>
<div style="left:0;top:219px;width:22px;height:1px;background:#9a9a9a"></div>
<div style="left:0;top:235px;width:22px;height:1px;background:#9a9a9a"></div>
<div style="left:0;top:251px;width:22px;height:1px;background:#9a9a9a"></div>
<div style="left:0;top:267px;width:22px;height:1px;background:#9a9a9a"></div>
<div style="left:0;top:283px;width:22px;height:1px;background:#9a9a9a"></div>
<div style="left:0;top:299px;width:22px;height:1px;background:#9a9a9a"></div>
<div style="left:0;top:315px;width:22px;height:1px;background:#9a9a9a"></div>
<div style="left:0;top:331px;width:22px;height:1px;background:#9a9a9a"></div>
<div style="left:0;top:347px;width:22px;height:1px;background:#9a9a9a"></div>
<div style="left:0;top:363px;width:22px;height:1px;background:#9a9a9a"></div>
<div style="left:0;top:379px;width:22px;height:1px;background:#9a9a9a"></div>
<div style="left:0;top:395px;width:22px;height:1px;background:#9a9a9a"></div>
<div style="left:0;top:411px;width:22px;height:1px;background:#9a9a9a"></div>
<div style="left:0;top:427px;width:22px;height:1px;background:#9a9a9a"></div>
<div style="left:0;top:443px;width:22px;height:1px;background:#9a9a9a"></div>
<div style="left:0;top:459px;width:22px;height:1px;background:#9a9a9a"></div>
<div style="left:0;top:475px;width:22px;height:1px;background:#9a9a9a"></div>
<div style="left:0;top:491px;width:22px;height:1px;background:#9a9a9a"></div>
<div style="left:0;top:507px;width:22px;height:1px;background:#9a9a9a"></div>
<div style="left:0;top:523px;width:22px;height:1px;background:#9a9a9a"></div>
<div style="left:0;top:539px;width:22px;height:1px;background:#9a9a9a"></div>
<div style="left:0;top:555px;width:22px;height:1px;background:#9a9a9a"></div>
<div style="left:0;top:571px;width:22px;height:1px;background:#9a9a9a"></div>
<div style="left:0;top:587px;width:22px;height:1px;background:#9a9a9a"></div>
<div style="left:0;top:603px;width:22px;height:1px;background:#9a9a9a"></div>
<div style="left:0;top:619px;width:22px;height:1px;background:#9a9a9a"></div>
<div style="left:0;top:635px;width:22px;height:1px;background:#9a9a9a"></div>
<div style="left:0;top:651px;width:22px;height:1px;background:#9a9a9a"></div>
<div style="left:0;top:667px;width:22px;height:1px;background:#9a9a9a"></div>
</div>
<div class="abs" style="left:22px;top:184px;width:1px;height:667px;background:#a6a6a6"></div>
<div class="abs" style="left:22px;top:297px;width:1px;height:58px;background:#2f6b3c"></div>
<div id="grid" class="abs">
<div class="vl" style="left:64px"></div>
<div class="vl" style="left:129px"></div>
<div class="vl" style="left:194px"></div>
<div class="vl" style="left:259px"></div>
<div class="vl" style="left:646px"></div>
<div class="vl" style="left:711px"></div>
<div class="vl" style="left:776px"></div>
<div class="vl" style="left:841px"></div>
<div class="vl" style="left:906px"></div>
<div class="vl" style="left:971px"></div>
<div class="vl" style="left:1036px"></div>
<div class="vl" style="left:1101px"></div>
<div class="vl" style="left:1166px"></div>
<div class="vl" style="left:1231px"></div>
<div class="vl" style="left:1296px"></div>
<div class="vl" style="left:1361px"></div>
<div class="hl" style="top:16px"></div>
<div class="hl" style="top:32px"></div>
<div class="hl" style="top:48px"></div>
<div class="hl" style="top:64px"></div>
<div class="hl" style="top:80px"></div>
<div class="hl" style="top:96px"></div>
<div class="hl" style="top:112px"></div>
<div class="hl" style="top:171px"></div>
<div class="hl" style="top:187px"></div>
<div class="hl" style="top:203px"></div>
<div class="hl" style="top:219px"></div>
<div class="hl" style="top:235px"></div>
<div class="hl" style="top:251px"></div>
<div class="hl" style="top:267px"></div>
<div class="hl" style="top:283px"></div>
<div class="hl" style="top:299px"></div>
<div class="hl" style="top:315px"></div>
<div class="hl" style="top:331px"></div>
<div class="hl" style="top:347px"></div>
<div class="hl" style="top:363px"></div>
<div class="hl" style="top:379px"></div>
<div class="hl" style="top:395px"></div>
<div class="hl" style="top:411px"></div>
<div class="hl" style="top:427px"></div>
<div class="hl" style="top:443px"></div>
<div class="hl" style="top:459px"></div>
<div class="hl" style="top:475px"></div>
<div class="hl" style="top:491px"></div>
<div class="hl" style="top:507px"></div>
<div class="hl" style="top:523px"></div>
<div class="hl" style="top:539px"></div>
<div class="hl" style="top:555px"></div>
<div class="hl" style="top:571px"></div>
<div class="hl" style="top:587px"></div>
<div class="hl" style="top:603px"></div>
<div class="hl" style="top:619px"></div>
<div class="hl" style="top:635px"></div>
<div class="hl" style="top:651px"></div>
<div class="hl" style="top:667px"></div>
</div>
<!-- A4 inactive selection -->
<div class="abs" style="left:22px;top:231px;width:67px;height:19px;border:2px solid #abc0ae"></div>
<!-- tooltip -->
<div class="abs" style="left:93px;top:254px;width:25px;height:20px;border-radius:2px;background:#353535;box-shadow:0 3px 8px rgba(0,0,0,.28)">
  <div class="t" style="left:-1px;width:25px;top:5px;text-align:center;font-size:11px;color:#fff;-webkit-text-stroke:.45px #fff">A4</div>
</div>
<!-- warning button -->
<div class="abs" style="left:246px;top:297px;width:24px;height:22px;border:1px solid #c8c8c8;border-radius:3px;background:#f4f4f4;box-shadow:0 1px 1px rgba(0,0,0,.08)">
  <svg style="left:3px;top:2px" width="17" height="16" viewBox="0 0 17 16">
    <path d="M8.500 1.400 L15.800 14.200 H1.200 Z" fill="#f0c030" stroke="#c89a18" stroke-width="1" stroke-linejoin="round"/>
    <rect x="7.700" y="5.200" width="1.700" height="5" fill="#222"/><rect x="7.700" y="11.200" width="1.700" height="1.700" fill="#222"/>
  </svg>
</div>
<!-- edit cell -->
<div class="abs" style="left:283px;top:297px;width:388px;height:58px;background:#fff"></div>
<div class="abs" style="left:281px;top:295px;width:390px;height:2px;background:#2f6b3c"></div>
<div class="abs" style="left:281px;top:295px;width:2px;height:62px;background:#2f6b3c"></div>
<div class="abs" style="left:281px;top:355px;width:385px;height:2px;background:#2f6b3c"></div>
<div class="abs" style="left:667px;top:355px;width:5px;height:3px;background:#2f6b3c"></div>
<div class="abs" style="left:665px;top:299px;width:1px;height:56px;background:#555"></div>
<div id="big" class="abs t" style="left:289px;top:307.300px;font-size:42.900px;font-weight:bold;color:#3b62c0;transform-origin:0 0;transform:scaleX(.9324)">=colleg.ipertestuale</div>
<div class="abs" style="left:289px;top:348px;width:376px;height:4px;background:#3b62c0"></div>
<!-- autocomplete -->
<div class="abs" style="left:282px;top:355px;width:178px;height:80px;background:#232323;border:1px solid #101010;border-radius:2px;box-shadow:0 4px 12px rgba(0,0,0,.3);font-size:13px">
  <div style="left:1px;top:20px;width:174px;height:19px;background:#3b6a2c"></div>
  <div class="t" style="left:9.500px;top:3.500px;font-size:13.500px;color:#c8c8c8">Usate di recente</div>
  <div class="t" id="ac1" style="left:17px;top:23.500px;font-size:12.400px;color:#b9c0b6">COLLEG.IPERTESTUALE</div>
  <div class="t" style="left:9.500px;top:41.500px;font-size:13.400px;color:#c8c8c8">Funzioni</div>
  <div class="t" id="ac2" style="left:17px;top:61.500px;font-size:12.400px;color:#f2f2f2">COLLEG.IPERTESTUALE</div>
</div>
<div id="sheettabs" class="abs">
  <div style="left:0;top:26px;width:1440px;height:1px;background:#0c0c0c"></div>
  <div class="arr" style="left:15px;top:9px;border:none;border-top:5px solid transparent;border-bottom:5px solid transparent;border-right:8px solid #666"></div>
  <div class="arr" style="left:38px;top:9px;border:none;border-top:5px solid transparent;border-bottom:5px solid transparent;border-left:8px solid #666"></div>
  <div style="left:139px;top:1px;width:79px;height:25px;background:#262626"></div>
  <div style="left:61px;top:0;width:78.500px;height:21.800px;background:#fff;border-radius:0 0 2.500px 2.500px"></div>
  <div class="t" style="left:61px;width:78px;top:7.300px;text-align:center;font-size:12.700px;color:#3d7d4a;-webkit-text-stroke:.55px #3d7d4a;letter-spacing:.1px">Foglio1</div>
  <div class="t" style="left:139px;width:79px;top:7.300px;text-align:center;font-size:12.700px;color:#8c8c8c">Foglio2</div>
  <div style="left:218px;top:2px;width:1px;height:19px;background:#5c5c5c"></div>
  <div style="left:256px;top:2px;width:1px;height:19px;background:#5c5c5c"></div>
  <svg style="left:232.500px;top:7.500px" width="11" height="11" viewBox="0 0 11 11"><path d="M5.500 0.500 V10.500 M0.500 5.500 H10.500" stroke="#e0e0e0" stroke-width="1.800"/></svg>
</div>
<div id="status" class="abs">
  <div class="t" style="left:24px;top:5px">Invio</div>
  <svg style="left:70px;top:2px" width="18" height="18" viewBox="0 0 18 18" fill="none" stroke="#e2e2e2" stroke-width="1">
    <circle cx="7.300" cy="3.100" r="1.700"/>
    <path d="M1.300 4.300 Q4.300 5.700 7.300 5.700 Q10.300 5.700 13.300 4.300 L13.900 5.700 Q11.600 7.100 9.600 7.500 L9.700 9.400 M8.300 11.300 L7.300 10.200 L5.300 15.700 L3.700 15.100 L5 9.600 L5 7.500 Q3 7.100 0.700 5.700 Z" stroke-linejoin="round" stroke-linecap="round"/>
    <path d="M9.200 8.900 L16.100 16 M16.100 8.900 L9.200 16" stroke-width="1.100"/>
  </svg>
  <div class="t" id="acc" style="left:89.500px;top:5px;font-size:12.750px">Accessibilità: verifica</div>
  <svg style="left:1132px;top:4px" width="15" height="14" viewBox="0 0 15 14" fill="none" stroke="#e6e6e6" stroke-width="1.200"><rect x="1" y="0.800" width="13" height="12"/><path d="M5.300 0.800 V12.800 M9.700 0.800 V12.800 M1 4.800 H14 M1 8.800 H14"/></svg>
  <svg style="left:1167px;top:4px" width="16" height="14" viewBox="0 0 16 14" fill="none" stroke="#e6e6e6" stroke-width="1.200"><rect x="1" y="0.800" width="14" height="12"/><rect x="4" y="3.400" width="8" height="7" stroke-width="1"/><path d="M5.600 5.600 H10.400 M5.600 7.400 H10.400" stroke-width="0.900"/></svg>
  <svg style="left:1203px;top:4px" width="16" height="14" viewBox="0 0 16 14" fill="none" stroke="#e6e6e6" stroke-width="1.200"><rect x="1" y="0.800" width="14" height="12"/><path d="M5 0.800 V7 H10 V0.800" /></svg>
  <div style="left:1237px;top:9.500px;width:8px;height:2px;background:#e6e6e6"></div>
  <div style="left:1252px;top:8.500px;width:100px;height:4px;border-radius:2px;background:#7a7a7a"></div>
  <div style="left:1294px;top:2.500px;width:16px;height:16px;border-radius:8px;background:#a9a9a9"></div>
  <svg style="left:1358px;top:5.500px" width="10" height="10" viewBox="0 0 10 10"><path d="M5 0.600 V9.400 M0.600 5 H9.400" stroke="#e6e6e6" stroke-width="1.800"/></svg>
  <div class="t" style="left:1384.500px;top:5px;font-size:12.400px">100%</div>
</div>
</body>
</html>
